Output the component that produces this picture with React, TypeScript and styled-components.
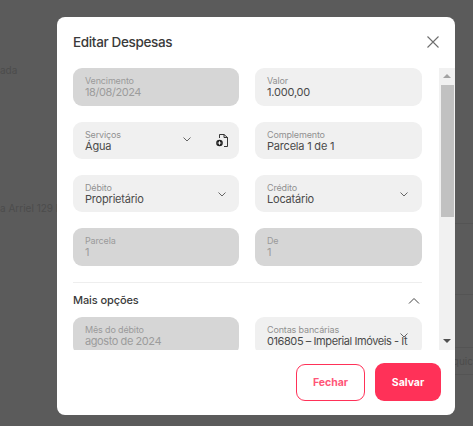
import React from "react";
import styled, { createGlobalStyle } from "styled-components";

const Global = createGlobalStyle`
  html, body { margin: 0; padding: 0; height: 100%; background: #5b5b5b; }
  body { font-family: "Inter", "Liberation Sans", sans-serif; overflow: hidden; }
  * { box-sizing: border-box; }
`;

const Page = styled.div`
  width: 473px;
  height: 426px;
  position: relative;
  overflow: hidden;
  background: #5b5b5b;
`;

const BackPage = styled.div`
  display: flex;
  flex-direction: column;
  padding-top: 63px;
  color: #4c4c4c;
  font-size: 10px;
  line-height: 14px;
`;

const BackRow = styled.div<{ $gap: number; $right?: boolean }>`
  display: flex;
  justify-content: ${(p) => (p.$right ? "flex-end" : "flex-start")};
  margin-bottom: ${(p) => p.$gap}px;
`;

const BackLine = styled.div<{ $gap: number }>`
  align-self: flex-end;
  width: 20px;
  height: 1px;
  background: #545454;
  margin-bottom: ${(p) => p.$gap}px;
`;

const Overlay = styled.div`
  position: absolute;
  inset: 0;
  display: flex;
  align-items: flex-start;
  padding: 17px 0 0 57px;
`;

const Modal = styled.div`
  width: 398px;
  height: 398px;
  background: #fff;
  border-radius: 8px;
  display: flex;
  flex-direction: column;
`;

const Header = styled.div`
  height: 51px;
  padding: 0 14px 2px 16px;
  display: flex;
  align-items: center;
  justify-content: space-between;
`;

const Title = styled.h2`
  margin: 0;
  font-size: 13.5px;
  line-height: 18px;
  font-weight: 500;
  letter-spacing: -0.35px;
  color: #3a3a3a;
`;

const CloseButton = styled.button`
  border: 0;
  padding: 0;
  background: none;
  width: 16px;
  height: 16px;
  display: flex;
  color: #6e6e6e;
`;

const Body = styled.div`
  display: flex;
  height: 282px;
`;

const Content = styled.div`
  flex: 1;
  overflow: hidden;
  padding: 0 17px 0 16px;
`;

const Grid = styled.div`
  display: grid;
  grid-template-columns: 166px 167px;
  column-gap: 16px;
  row-gap: 16px;
`;

const Field = styled.div<{ $disabled?: boolean; $h?: number }>`
  position: relative;
  height: ${(p) => p.$h ?? 38}px;
  border-radius: 9px;
  background: ${(p) => (p.$disabled ? "#d6d6d6" : "#f0f0f0")};
  padding: 7px 12px 0;
  display: flex;
  flex-direction: column;
  overflow: hidden;
`;

const Label = styled.span<{ $disabled?: boolean }>`
  font-size: 9px;
  line-height: 11px;
  letter-spacing: -0.15px;
  color: ${(p) => (p.$disabled ? "#9a9a9a" : "#909090")};
  white-space: nowrap;
`;

const Value = styled.span<{ $disabled?: boolean; $tight?: boolean }>`
  font-size: 11px;
  line-height: 13px;
  letter-spacing: ${(p) => (p.$tight ? "-0.42px" : "-0.2px")};
  color: ${(p) => (p.$disabled ? "#9c9c9c" : "#4a4a4a")};
  white-space: nowrap;
`;

const Chevron = styled.svg<{ $right: number; $top: number }>`
  position: absolute;
  right: ${(p) => p.$right}px;
  top: ${(p) => p.$top}px;
  width: 8px;
  height: 5px;
  fill: none;
  stroke: #555;
  stroke-width: 0.9;
`;

const DocIcon = styled.svg`
  position: absolute;
  right: 11px;
  top: 12px;
  width: 12px;
  height: 13px;
`;

const Divider = styled.hr`
  border: 0;
  border-top: 1px solid #eeeeee;
  margin: 16px 0 0;
`;

const Section = styled.div`
  display: flex;
  align-items: center;
  justify-content: space-between;
  height: 34px;
  padding-right: 2px;
`;

const SectionTitle = styled.span`
  font-size: 11px;
  font-weight: 500;
  letter-spacing: -0.1px;
  color: #3a3a3a;
`;

const UpIcon = styled.svg`
  width: 12px;
  height: 7px;
  fill: none;
  stroke: #444;
  stroke-width: 1;
`;

const ScrollBar = styled.div`
  width: 16px;
  background: #f1f1f1;
  display: flex;
  flex-direction: column;
  align-items: center;
`;

const ScrollArrow = styled.div<{ $up?: boolean }>`
  width: 0;
  height: 0;
  border-left: 4px solid transparent;
  border-right: 4px solid transparent;
  ${(p) => (p.$up ? "border-bottom: 4px solid #a3a3a3; margin-top: 6px;" : "border-top: 4px solid #505050;")}
`;

const Thumb = styled.div`
  width: 13px;
  height: 132px;
  margin-top: 7px;
  margin-bottom: 122px;
  background: #c1c1c1;
`;

const Footer = styled.div`
  flex: 1;
  display: flex;
  justify-content: flex-end;
  align-items: flex-start;
  gap: 10px;
  padding: 13px 14px 0 0;
`;

const OutlineButton = styled.button`
  width: 69px;
  height: 37px;
  margin-top: 1px;
  border: 1px solid #ff3158;
  border-radius: 9px;
  background: #fff;
  color: #ff5577;
  font: 700 10.5px "Inter", "Liberation Sans", sans-serif;
`;

const SolidButton = styled.button`
  width: 66px;
  height: 38px;
  border: 0;
  border-radius: 9px;
  background: #ff3158;
  color: #fff;
  font: 700 10.5px "Inter", "Liberation Sans", sans-serif;
`;

const Down = ({ right = 13, top = 17 }: { right?: number; top?: number }) => (
  <Chevron $right={right} $top={top} viewBox="0 0 8 5">
    <path d="M.5.5L4 4 7.500.5" />
  </Chevron>
);

export default function App() {
  return (
    <Page>
      <Global />
      <BackPage>
        <BackRow $gap={124}><span>ada</span></BackRow>
        <BackRow $gap={8}><span>a Arriel 129 P</span></BackRow>
        <BackLine $gap={70} />
        <BackLine $gap={52} />
        <BackLine $gap={6} />
        <BackRow $gap={6} $right><span>quic</span></BackRow>
        <BackLine $gap={0} />
      </BackPage>
      <Overlay>
        <Modal>
          <Header>
            <Title>Editar Despesas</Title>
            <CloseButton aria-label="Fechar">
              <svg width="16" height="16" viewBox="0 0 16 16" fill="none" stroke="currentColor" strokeWidth="1.1">
                <path d="M2.500 2.500l11 11M13.500 2.500l-11 11" />
              </svg>
            </CloseButton>
          </Header>
          <Body>
            <Content>
              <Grid>
                <Field $disabled><Label $disabled>Vencimento</Label><Value $disabled $tight>18/08/2024</Value></Field>
                <Field><Label>Valor</Label><Value>1.000,00</Value></Field>
                <Field $h={37}>
                  <Label>Serviços</Label><Value>Água</Value>
                  <Down right={48} top={15} />
                  <DocIcon viewBox="0 0 12 13">
                    <path d="M3.500 4V.5H8L11.500 3.500V12.500H8" fill="none" stroke="#222" strokeWidth="0.9" />
                    <path d="M8 .5V3.500H11.500" fill="none" stroke="#222" strokeWidth="0.9" />
                    <circle cx="3.500" cy="9" r="3.300" fill="#222" />
                    <path d="M1.700 9h3.600M3.500 7.200v3.600" stroke="#fff" strokeWidth="0.9" />
                  </DocIcon>
                </Field>
                <Field $h={37}><Label>Complemento</Label><Value>Parcela 1 de 1</Value></Field>
                <Field $h={37}><Label>Débito</Label><Value>Proprietário</Value><Down /></Field>
                <Field $h={37}><Label>Crédito</Label><Value>Locatário</Value><Down right={14} /></Field>
                <Field $disabled><Label $disabled>Parcela</Label><Value $disabled>1</Value></Field>
                <Field $disabled><Label $disabled>De</Label><Value $disabled>1</Value></Field>
              </Grid>
              <Divider />
              <Section>
                <SectionTitle>Mais opções</SectionTitle>
                <UpIcon viewBox="0 0 12 7"><path d="M1 6.500l5-5 5 5" /></UpIcon>
              </Section>
              <Grid>
                <Field $disabled><Label $disabled>Mês do débito</Label><Value $disabled $tight>agosto de 2024</Value></Field>
                <Field>
                  <Label>Contas bancárias</Label>
                  <Value $tight>016805 – Imperial Imóveis - It</Value>
                  <Down right={14} top={16} />
                </Field>
              </Grid>
            </Content>
            <ScrollBar>
              <ScrollArrow $up />
              <Thumb />
              <ScrollArrow />
            </ScrollBar>
          </Body>
          <Footer>
            <OutlineButton>Fechar</OutlineButton>
            <SolidButton>Salvar</SolidButton>
          </Footer>
        </Modal>
      </Overlay>
    </Page>
  );
}
